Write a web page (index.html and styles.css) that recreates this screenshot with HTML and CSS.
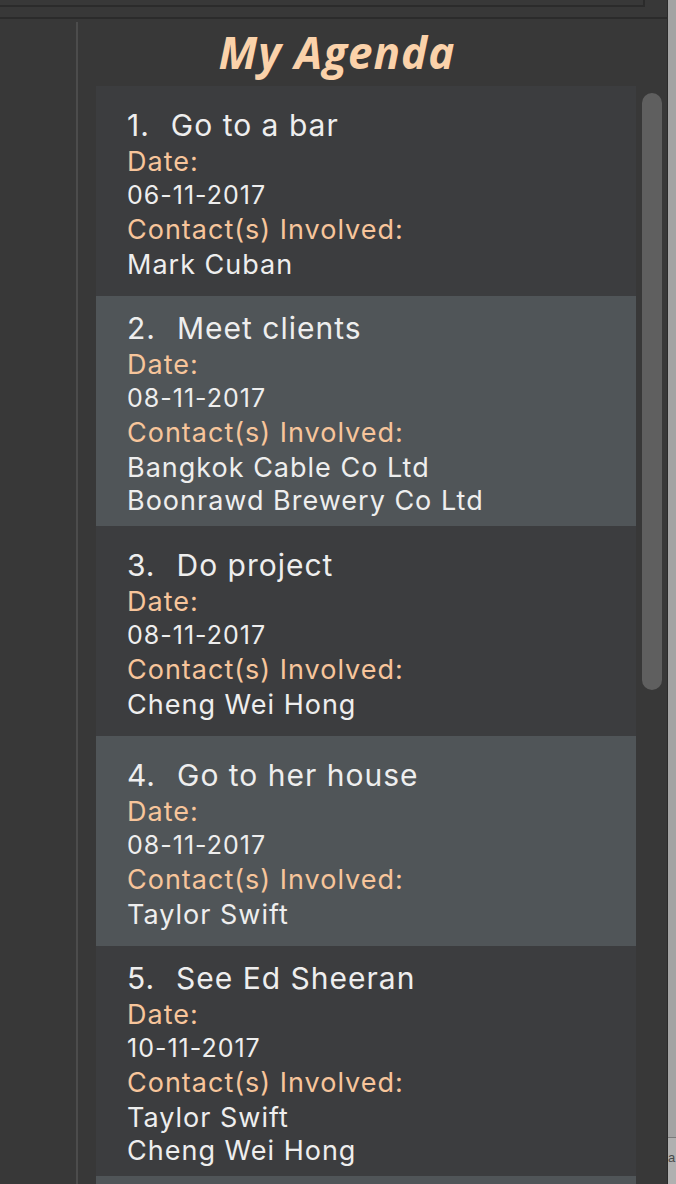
FILE: index.html
```html
<!DOCTYPE html>
<html>
<head>
<meta charset="utf-8">
<link rel="stylesheet" href="styles.css">
</head>
<body>
<div class="window">
  <div class="content">
    <div class="topbar"><div class="topbox"></div></div>
    <div class="main">
      <div class="leftpanel"></div>
      <div class="divider"></div>
      <div class="rightpanel">
        <div class="heading">My Agenda</div>
        <div class="listrow">
          <div class="list">
            <div class="card odd">
              <div class="title"><span class="idx">1.</span><span>Go to a bar</span></div>
              <div class="label">Date:</div>
              <div class="value date">06-11-2017</div>
              <div class="label">Contact(s) Involved:</div>
              <div class="value">Mark Cuban</div>
            </div>
            <div class="card even">
              <div class="title"><span class="idx">2.</span><span>Meet clients</span></div>
              <div class="label">Date:</div>
              <div class="value date">08-11-2017</div>
              <div class="label">Contact(s) Involved:</div>
              <div class="value">Bangkok Cable Co Ltd</div>
              <div class="value">Boonrawd Brewery Co Ltd</div>
            </div>
            <div class="card odd">
              <div class="title"><span class="idx">3.</span><span>Do project</span></div>
              <div class="label">Date:</div>
              <div class="value date">08-11-2017</div>
              <div class="label">Contact(s) Involved:</div>
              <div class="value">Cheng Wei Hong</div>
            </div>
            <div class="card even">
              <div class="title"><span class="idx">4.</span><span>Go to her house</span></div>
              <div class="label">Date:</div>
              <div class="value date">08-11-2017</div>
              <div class="label">Contact(s) Involved:</div>
              <div class="value">Taylor Swift</div>
            </div>
            <div class="card odd">
              <div class="title"><span class="idx">5.</span><span>See Ed Sheeran</span></div>
              <div class="label">Date:</div>
              <div class="value date">10-11-2017</div>
              <div class="label">Contact(s) Involved:</div>
              <div class="value">Taylor Swift</div>
              <div class="value">Cheng Wei Hong</div>
            </div>
            <div class="card even"></div>
          </div>
          <div class="scrolltrack"><div class="thumb"></div></div>
        </div>
      </div>
    </div>
  </div>
  <div class="edge">
    <div class="edge-status">a</div>
  </div>
</div>
</body>
</html>
```

FILE: styles.css
```css
html, body {
  margin: 0;
  padding: 0;
}
body {
  background: #383838;
  width: 676px;
  height: 1184px;
  overflow: hidden;
  font-family: Inter, "Open Sans", sans-serif;
}
.window {
  display: flex;
  height: 1184px;
}
.content {
  width: 667px;
  display: flex;
  flex-direction: column;
}
.topbar {
  height: 17px;
  border-bottom: 2px solid #2b2b2b;
}
.topbox {
  width: 643px;
  height: 5px;
  border-bottom: 2px solid #2b2b2b;
  border-right: 2px solid #2b2b2b;
}
.main {
  flex: 1;
  display: flex;
  min-height: 0;
}
.leftpanel {
  width: 76px;
}
.divider {
  width: 2px;
  margin-top: 3px;
  background: #4c4c4c;
}
.rightpanel {
  flex: 1;
  display: flex;
  flex-direction: column;
  min-width: 0;
}
.heading {
  height: 67px;
  box-sizing: border-box;
  padding-top: 5px;
  padding-right: 71px;
  text-align: center;
  font-family: "Open Sans", sans-serif;
  font-weight: 700;
  font-style: italic;
  font-size: 44px;
  letter-spacing: 1px;
  line-height: 56px;
  color: #fbd2aa;
}
.listrow {
  display: flex;
  flex: 1;
  min-height: 0;
  padding-left: 18px;
}
.list {
  width: 540px;
  overflow: hidden;
}
.card {
  min-height: 210px;
  box-sizing: border-box;
  padding: 13px 0 9px 31px;
  display: flex;
  flex-direction: column;
  justify-content: center;
  color: #eeeeee;
  letter-spacing: 1px;
}
.card.odd {
  background: #3c3d3f;
}
.card.even {
  background: #505558;
}
.title {
  display: flex;
  gap: 21px;
  font-size: 30px;
  line-height: 38px;
}
.label {
  font-size: 27px;
  line-height: 35px;
  color: #f7c59b;
}
.label + .value + .label {
  line-height: 36px;
}
.value {
  font-size: 27px;
  line-height: 33px;
}
.value.date {
  font-size: 25px;
}
.scrolltrack {
  width: 31px;
  padding-top: 7px;
  box-sizing: border-box;
}
.thumb {
  width: 20px;
  height: 597px;
  margin-left: 6px;
  border-radius: 10px;
  background: #5f5f5f;
}
.edge {
  width: 9px;
  border-left: 1px solid #2b2b2b;
  background: #a3a3a3;
  display: flex;
  flex-direction: column;
  justify-content: flex-end;
  overflow: hidden;
}
.edge-status {
  height: 46px;
  border-top: 1px solid #7a7a7a;
  background: #b0b0b0;
  color: #4a4a4a;
  font-family: "Liberation Sans", sans-serif;
  font-size: 13px;
  line-height: 40px;
}
```
